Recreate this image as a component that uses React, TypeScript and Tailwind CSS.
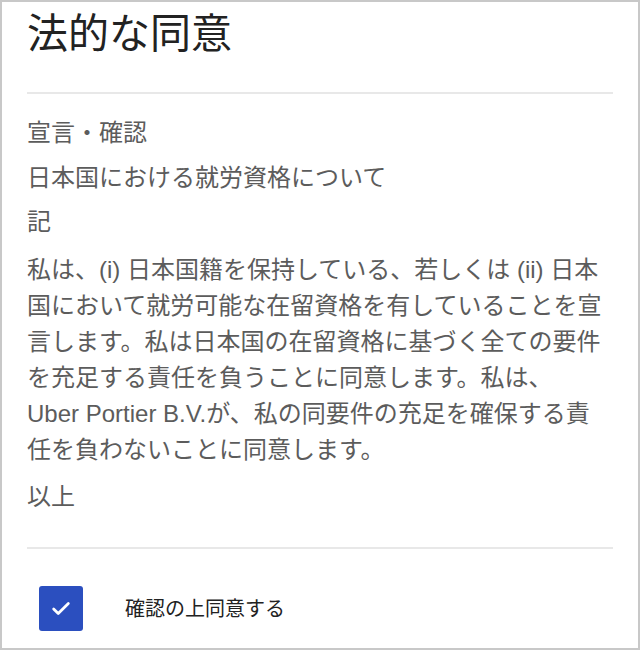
import React from 'react';
import { Check } from 'lucide-react';

const font = { fontFamily: '"Liberation Sans", "Noto Sans CJK JP", sans-serif' };

export default function App() {
  return (
    <div
      style={font}
      className="w-[640px] h-[650px] border-2 border-[#c8c8c8] bg-white px-[25px] overflow-hidden"
    >
      {/* Title */}
      <h1 className="pt-[12px] text-[41px] leading-[40px] text-[#222] font-normal">法的な同意</h1>

      <div className="mt-[38px] h-[2px] bg-[#e8e8e8]" />

      {/* Declaration */}
      <div className="text-[24px] leading-[36px] text-[#5c5c5c]">
        <p className="mt-[21px]">宣言・確認</p>
        <p className="mt-[9px]">日本国における就労資格について</p>
        <p className="mt-[8px]">記</p>
        <p className="mt-[12px]">
          私は、(i) 日本国籍を保持している、若しくは (ii) 日本国において就労可能な在留資格を有していることを宣言します。私は日本国の在留資格に基づく全ての要件を充足する責任を負うことに同意します。私は、
          <br />
          Uber Portier B.V.が、私の同要件の充足を確保する責任を負わないことに同意します。
        </p>
        <p className="mt-[11px]">以上</p>
      </div>

      <div className="mt-[32px] h-[2px] bg-[#e8e8e8]" />

      {/* Agreement checkbox */}
      <div className="mt-[37px] flex items-center pl-[12px]">
        <div className="w-[44px] h-[45px] rounded-[3px] bg-[#2b4fbf] flex items-center justify-center">
          <Check className="w-[22px] h-[22px] text-white" strokeWidth={3} />
        </div>
        <span className="ml-[42px] text-[20px] leading-[28px] text-[#222]">確認の上同意する</span>
      </div>
    </div>
  );
}
